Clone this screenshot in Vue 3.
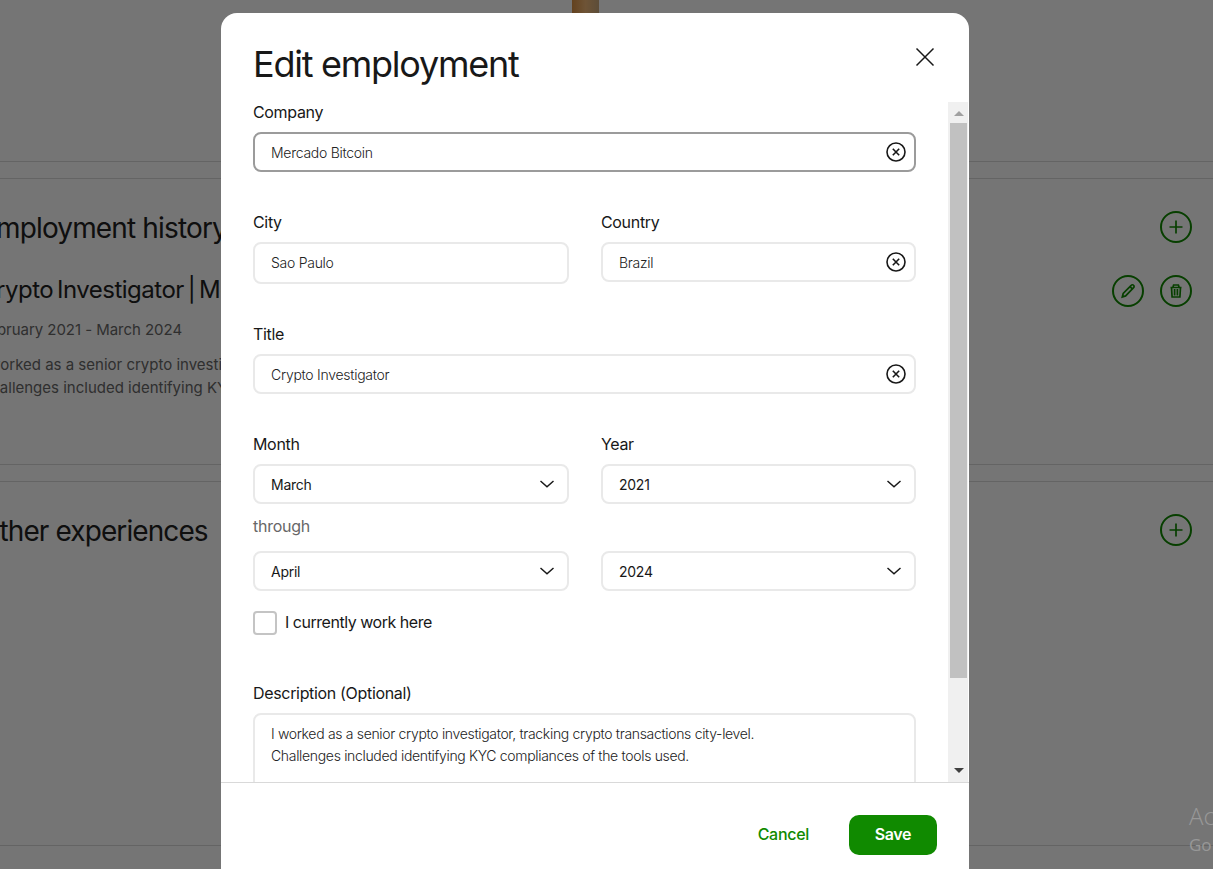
<script setup>
const months = { start: 'March', end: 'April' }
const years = { start: '2021', end: '2024' }
</script>

<template>
  <div class="screen">
    <main class="page">
      <section class="card first"><div class="figure"></div></section>
      <section class="card history">
        <div class="row head">
          <h2 class="h-history">Employment history</h2>
          <span class="round"><svg viewBox="0 0 32 32"><circle cx="16" cy="16" r="15" /><path d="M16 9.500v13M9.500 16h13" /></svg></span>
        </div>
        <div class="row job">
          <h3>Crypto Investigator | Mercado Bitcoin</h3>
          <div class="actions">
            <span class="round"><svg viewBox="0 0 32 32"><circle cx="16" cy="16" r="15" /><path d="M10.300 22l.9-3.500 8-8.200a1.600 1.600 0 0 1 2.400 0a1.600 1.600 0 0 1 0 2.300l-8 8.300z M18 11.600l2.300 2.300" /></svg></span>
            <span class="round"><svg viewBox="0 0 32 32"><circle cx="16" cy="16" r="15" /><path d="M10.500 12.500h11M13 12l.6-2h4.800l.6 2M11.500 12.500l.6 9.500h7.800l.6-9.500M14.600 14v6.500M17.400 14v6.500" /></svg></span>
          </div>
        </div>
        <p class="dates">February 2021 - March 2024</p>
        <p class="desc d1">I worked as a senior crypto investigator,</p>
        <p class="desc d2">Challenges included identifying KYC</p>
      </section>
      <section class="card other">
        <div class="row head">
          <h2 class="h-other">Other experiences</h2>
          <span class="round"><svg viewBox="0 0 32 32"><circle cx="16" cy="16" r="15" /><path d="M16 9.500v13M9.500 16h13" /></svg></span>
        </div>
      </section>
    </main>

    <div class="overlay">
      <div class="dialog">
        <header>
          <h1>Edit employment</h1>
          <svg class="close" viewBox="0 0 20 20"><path d="M1.500 1.500l17 17M18.500 1.500l-17 17" /></svg>
        </header>

        <div class="scroller">
          <form class="form">
            <div class="group">
              <label>Company</label>
              <div class="field focus"><span class="light">Mercado Bitcoin</span>
                <svg class="clear" viewBox="0 0 20 20"><circle cx="10" cy="10" r="9" /><path d="M6.800 6.800l6.400 6.400M13.200 6.800l-6.400 6.400" /></svg></div>
            </div>
            <div class="cols gap">
              <div class="group">
                <label>City</label>
                <div class="field tall"><span class="light">Sao Paulo</span></div>
              </div>
              <div class="group">
                <label>Country</label>
                <div class="field"><span class="light">Brazil</span>
                  <svg class="clear" viewBox="0 0 20 20"><circle cx="10" cy="10" r="9" /><path d="M6.800 6.800l6.400 6.400M13.200 6.800l-6.400 6.400" /></svg></div>
              </div>
            </div>
            <div class="group gap">
              <label>Title</label>
              <div class="field"><span class="light">Crypto Investigator</span>
                <svg class="clear" viewBox="0 0 20 20"><circle cx="10" cy="10" r="9" /><path d="M6.800 6.800l6.400 6.400M13.200 6.800l-6.400 6.400" /></svg></div>
            </div>
            <div class="cols gap">
              <div class="group">
                <label>Month</label>
                <div class="field"><span class="pick">{{ months.start }}</span><svg class="chev" viewBox="0 0 14 8"><path d="M.5 1L7 6.700 13.500 1" /></svg></div>
              </div>
              <div class="group">
                <label>Year</label>
                <div class="field"><span class="pick">{{ years.start }}</span><svg class="chev" viewBox="0 0 14 8"><path d="M.5 1L7 6.700 13.500 1" /></svg></div>
              </div>
            </div>
            <div class="through"><span>through</span></div>
            <div class="cols">
              <div class="field"><span class="pick">{{ months.end }}</span><svg class="chev" viewBox="0 0 14 8"><path d="M.5 1L7 6.700 13.500 1" /></svg></div>
              <div class="field"><span class="pick">{{ years.end }}</span><svg class="chev" viewBox="0 0 14 8"><path d="M.5 1L7 6.700 13.500 1" /></svg></div>
            </div>
            <div class="check"><i class="box"></i><span class="check-text">I currently work here</span></div>
            <div class="group about">
              <label>Description (Optional)</label>
              <div class="area light">
                <div>I worked as a senior crypto investigator, tracking crypto transactions city-level.</div>
                <div>Challenges included identifying KYC compliances of the tools used.</div>
              </div>
            </div>
          </form>
          <div class="bar">
            <svg class="arrow" viewBox="0 0 10 5"><path fill="#a0a0a0" d="M0 5L5 0l5 5z" /></svg>
            <div class="thumb"></div>
            <svg class="arrow down" viewBox="0 0 10 5"><path fill="#404040" d="M0 0h10L5 5z" /></svg>
          </div>
        </div>

        <footer>
          <span class="cancel">Cancel</span>
          <span class="save">Save</span>
        </footer>
      </div>
    </div>

    <div class="watermark"><div class="w1">Activate Windows</div><div class="w2">Go to Settings to activate Windows.</div></div>
  </div>
</template>

<style>
body { margin: 0; overflow: hidden; }
</style>

<style scoped>
.screen { position: relative; width: 1213px; height: 869px; overflow: hidden; background: #fff; font-family: Inter, "Liberation Sans", sans-serif; color: #181818; }
h1, h2, h3, p { margin: 0; font-weight: 400; white-space: nowrap; }
svg { display: block; fill: none; flex: none; }
.page { display: flex; flex-direction: column; gap: 16px; }
.card { box-sizing: border-box; border: 1px solid #d9d9d9; border-left: 0; border-right: 0; }
.first { height: 162px; border-top: 0; }
.figure { width: 27px; height: 14px; margin-left: 572px; background: linear-gradient(90deg, #d88f42, #f0b777 50%, #c9a87c); }
.history { height: 287px; padding-top: 32px; }
.other { height: 365px; padding-top: 32px; }
.row { display: flex; align-items: center; justify-content: space-between; padding-right: 21px; height: 32px; }
.actions { display: flex; gap: 16px; }
.round svg { width: 32px; height: 32px; stroke: #108a00; stroke-width: 1.7; }
.round circle { stroke-width: 2; }
h2 { font-size: 28px; line-height: 32px; color: #222; padding-top: 2px; }
h3 { font-size: 24px; line-height: 32px; color: #222; padding-bottom: 3px; }
.h-history { margin-left: -20px; letter-spacing: -.85px; }
.h-other { margin-left: -21px; letter-spacing: -.9px; }
.job { margin-top: 32px; }
.job h3 { margin-left: -21px; letter-spacing: -.5px; word-spacing: -2.400px; }
.dates { margin: 12px 0 0 -20px; font-size: 15px; line-height: 22px; color: #676767; letter-spacing: -.04px; }
.desc { margin-left: -20px; font-size: 15px; line-height: 23px; color: #676767; }
.d1 { margin-top: 12px; }

.overlay { position: absolute; inset: 0; background: rgba(0, 0, 0, .54); padding: 13px 0 0 221px; }
.dialog { width: 748px; height: 870px; background: #fff; border-radius: 16px 16px 0 0; overflow: hidden; }
header { box-sizing: border-box; height: 89px; padding: 29px 34px 0 32px; display: flex; justify-content: space-between; }
h1 { font-size: 36px; line-height: 44px; letter-spacing: -1.250px; }
.close { width: 20px; height: 20px; margin-top: 5px; stroke: #181818; stroke-width: 1.5; }
.scroller { height: 680px; display: flex; justify-content: space-between; overflow: hidden; }
.form { width: 663px; margin-left: 32px; font-size: 16px; }
.group { display: flex; flex-direction: column; gap: 10px; align-items: stretch; }
label { line-height: 20px; height: 20px; font-size: 16px; align-self: flex-start; white-space: nowrap; letter-spacing: -.330px; }
.gap { margin-top: 40px; }
.cols { display: grid; grid-template-columns: 316px 315px; column-gap: 32px; align-items: start; }
.field { box-sizing: border-box; height: 40px; border: 2px solid #e9e9e9; border-radius: 8px; padding: 0 8px 0 16px; display: flex; align-items: center; justify-content: space-between; font-size: 14px; }
.focus { border-color: #9b9b9b; }
.tall { height: 42px; }
.light { font-weight: 300; font-size: 14px; color: #222; line-height: 20px; white-space: nowrap; letter-spacing: -.270px; }
.field .light { padding-top: 2px; }
.tall .light { padding-top: 0; }
.pick { line-height: 20px; white-space: nowrap; letter-spacing: -.250px; padding-top: 1px; }
.clear { width: 20px; height: 20px; stroke: #181818; stroke-width: 1.6; }
.chev { width: 14px; height: 8px; margin-right: 5px; stroke: #181818; stroke-width: 1.5; }
.through { margin: 12px 0 15px; line-height: 20px; height: 20px; color: #676767; letter-spacing: -.260px; }
.check { display: flex; gap: 8px; align-items: center; height: 24px; margin-top: 20px; white-space: nowrap; letter-spacing: -.470px; }
.check-text { padding-bottom: 2px; }
.box { box-sizing: border-box; width: 24px; height: 24px; border: 2px solid #c4c4c4; border-radius: 4px; }
.about { margin-top: 48px; }
.area { box-sizing: border-box; height: 120px; border: 2px solid #e9e9e9; border-radius: 8px; padding: 8px 16px; line-height: 22px; letter-spacing: -.325px; }
.bar { box-sizing: border-box; width: 20px; margin-right: 1px; background: #f0f0f0; display: flex; flex-direction: column; align-items: center; padding: 9px 0 9px; }
.arrow { width: 10px; height: 5px; margin-left: 1px; }
.thumb { width: 17px; height: 555px; margin: 7px 0 0 1px; background: #c1c1c1; }
.down { margin-top: auto; }
footer { box-sizing: border-box; border-top: 1px solid #d9d9d9; display: flex; align-items: center; justify-content: flex-end; padding: 32px 32px 0 0; height: 73px; gap: 40px; font-weight: 500; font-size: 16px; }
.cancel { color: #108a00; letter-spacing: -.3px; padding-bottom: 2px; }
.save { box-sizing: border-box; width: 88px; height: 40px; border-radius: 10px; background: #108a00; color: #fff; line-height: 38px; text-align: center; flex: none; font-weight: 600; letter-spacing: -.4px; }
.watermark { position: absolute; left: 1189px; top: 801px; white-space: nowrap; color: #989898; font-family: "Open Sans", "Noto Sans", sans-serif; }
.w1 { font-size: 24px; line-height: 30px; font-weight: 300; }
.w2 { font-size: 17px; line-height: 28px; }
</style>
